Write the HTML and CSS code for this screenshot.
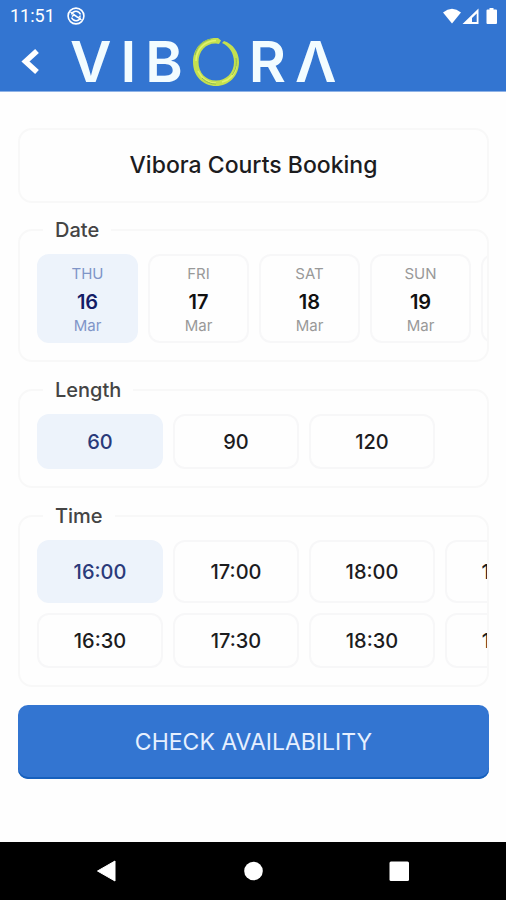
FILE: index.html
```html
<!DOCTYPE html>
<html lang="en">
<head>
<meta charset="utf-8">
<meta name="viewport" content="width=device-width, initial-scale=1">
<title>Vibora Courts Booking</title>
<link rel="stylesheet" href="styles.css">
</head>
<body>
<header class="top">
  <div class="status">
    <span class="clock">11:51</span>
    <svg class="status-app" width="20" height="20" viewBox="0 0 20 20" fill="none" stroke="#fff" aria-hidden="true">
      <circle cx="10" cy="10" r="7.9" stroke-width="1.6"/>
      <path d="M5.500 8.500C7 4.500 12.500 4 14.500 8.500M14.500 11.500C13 15.500 7.500 16 5.500 11.500" stroke-width="1.500"/>
      <path d="M4.500 6L15.500 14M6 10.500c2-2.500 4-.5 5 .5s2.500.5 3.500-1.500" stroke-width="1.500"/>
    </svg>
    <svg class="status-icons" width="56" height="20" viewBox="0 0 56 20" fill="#fff" aria-hidden="true">
      <path d="M1 6.500Q10-.8 19 6.500L10 17.500Z"/>
      <path fill-rule="evenodd" d="M20.500 18L36.500 2.500V18ZM30 16H34.700V7.600L30 12Z"/>
      <path d="M47.500 2h4v1.500H54q1 0 1 1V17q0 1-1 1h-8.500q-1 0-1-1V4.500q0-1 1-1h2Z"/>
    </svg>
  </div>
  <div class="bar">
    <button class="back" type="button" aria-label="Back">
      <svg width="20" height="28" viewBox="0 0 20 28" fill="none" stroke="#fff" stroke-width="5.500" aria-hidden="true"><path d="M17 3L5.500 13.500l11.500 10.500"/></svg>
    </button>
    <div class="logo">
      <span>V</span><span>I</span><span>B</span>
      <svg width="48" height="50" viewBox="0 0 48 50" fill="none" aria-hidden="true">
        <path fill="#c4e04f" fill-rule="evenodd" d="M29 3.500L26 1C12 0 1 10 1 25c0 14 10 24 23 24s23-10 23-24C47 15 41 7 32 4l-2 2c7 3 12 10 12 19 0 11-8 18.500-18 18.500S6.500 36 6.500 25 14 6 24 6.500L27 7Z"/>
        <path stroke="#e2f36c" stroke-width="1.500" d="M24 3.500C12 4 4 13 4 24M6 34c4 8 10 12 18 12M30 45c8-2 13-8 14.500-16"/>
        <path stroke="#8fbd58" d="M3 18C5 9 11 4 19 2M10 41c4 4 9 6 14 6M40 38c4-5 5-11 4-17"/>
      </svg>
      <span>R</span><span>Λ</span>
    </div>
  </div>
</header>
<main class="content">
  <h1 class="title">Vibora Courts Booking</h1>
  <fieldset class="group">
    <legend>Date</legend>
    <div class="row">
      <button class="day selected" type="button" aria-pressed="true"><span>THU</span><strong>16</strong><span>Mar</span></button>
      <button class="day" type="button" aria-pressed="false"><span>FRI</span><strong>17</strong><span>Mar</span></button>
      <button class="day" type="button" aria-pressed="false"><span>SAT</span><strong>18</strong><span>Mar</span></button>
      <button class="day" type="button" aria-pressed="false"><span>SUN</span><strong>19</strong><span>Mar</span></button>
      <button class="day" type="button" aria-label="Next day"></button>
    </div>
  </fieldset>
  <fieldset class="group">
    <legend>Length</legend>
    <div class="row">
      <button class="slot selected" type="button" aria-pressed="true">60</button>
      <button class="slot" type="button" aria-pressed="false">90</button>
      <button class="slot" type="button" aria-pressed="false">120</button>
    </div>
  </fieldset>
  <fieldset class="group">
    <legend>Time</legend>
    <div class="row">
      <button class="slot tall selected" type="button" aria-pressed="true">16:00</button>
      <button class="slot tall" type="button" aria-pressed="false">17:00</button>
      <button class="slot tall" type="button" aria-pressed="false">18:00</button>
      <button class="slot tall" type="button" aria-pressed="false">19:00</button>
    </div>
    <div class="row">
      <button class="slot" type="button" aria-pressed="false">16:30</button>
      <button class="slot" type="button" aria-pressed="false">17:30</button>
      <button class="slot" type="button" aria-pressed="false">18:30</button>
      <button class="slot" type="button" aria-pressed="false">19:30</button>
    </div>
  </fieldset>
  <button class="submit" type="button">CHECK AVAILABILITY</button>
</main>
<nav class="system" aria-label="System">
  <button type="button" aria-label="Back"><svg width="22" height="22" viewBox="0 0 22 22" fill="#fff"><path d="M19 1v20L1.500 11Z" stroke="#fff" stroke-linejoin="round"/></svg></button>
  <button type="button" aria-label="Home"><svg width="22" height="22" viewBox="0 0 22 22" fill="#fff"><circle cx="11.500" cy="11" r="9.300"/></svg></button>
  <button type="button" aria-label="Recent apps"><svg width="22" height="22" viewBox="0 0 22 22" fill="#fff"><rect x="1.500" y="1.500" width="19.500" height="19.500" rx="1.500"/></svg></button>
</nav>
</body>
</html>
```
FILE: styles.css
```css
* {
  box-sizing: border-box;
}

body {
  margin: 0;
  min-height: 100vh;
  display: flex;
  flex-direction: column;
  background: #fefefe;
  color: #1c1c1e;
  font-family: Inter, "Liberation Sans", sans-serif;
}

button {
  margin: 0;
  padding: 0;
  border: 0;
  background: none;
  color: inherit;
  font: inherit;
}

svg {
  display: block;
  flex: none;
}

.top {
  background: #3375d1;
  border-bottom: 1px solid #8eb2e6;
  color: #fff;
}

.status {
  display: flex;
  align-items: center;
  height: 32px;
  padding: 0 8px 0 10px;
}

.clock {
  font: 400 18px/20px Roboto, sans-serif;
}

.status-app {
  margin-left: 11px;
}

.status-icons {
  margin-left: auto;
}

.bar {
  display: flex;
  align-items: center;
  gap: 30px;
  height: 59px;
  padding: 0 20px;
}

.logo {
  display: flex;
  align-items: center;
  gap: 9px;
  color: #f2fcff;
  font: 600 57px/60px Inter, sans-serif;
}

.content {
  flex: 1;
  display: flex;
  flex-direction: column;
  padding: 36px 17px 20px 18px;
}

.title {
  margin: 0 0 15px;
  padding: 21px 16px;
  border: 2px solid #f8f8f8;
  border-radius: 14px;
  text-align: center;
  font-size: 23px;
  line-height: 29px;
  font-weight: 500;
}

.group {
  min-width: 0;
  margin: 0 0 16px;
  padding: 12px 0 17px 17px;
  border: 2px solid #f8f8f8;
  border-radius: 14px;
}

.group legend {
  margin-left: 6px;
  padding: 0 12px;
  color: #444;
  font-size: 20px;
  line-height: 24px;
  font-weight: 500;
}

.row {
  display: flex;
  gap: 10px;
  overflow: hidden;
}

.row + .row {
  margin-top: 10px;
}

.day,
.slot {
  flex: none;
  border: 2px solid #f7f7f8;
  border-radius: 12px;
  background: #fefefe;
}

.day {
  display: flex;
  flex-direction: column;
  align-items: center;
  justify-content: center;
  width: 101px;
  height: 89px;
  padding-bottom: 2px;
  color: #999;
  font-size: 15px;
  line-height: 24px;
}

.day strong {
  color: #111;
  font-size: 20px;
  line-height: 32px;
  font-weight: 600;
}

.day span:last-child {
  line-height: 16px;
}

.slot {
  width: 126px;
  height: 55px;
  font-size: 20px;
  font-weight: 500;
}

.tall {
  height: 63px;
}

.selected {
  border-color: #edf3fb;
  background: #edf3fb;
  color: #2a3a7a;
}

.day.selected {
  color: #7f95c8;
}

.day.selected strong {
  color: #141c66;
}

.submit {
  min-height: 74px;
  margin-top: 2px;
  border-radius: 10px;
  background: #3375d1;
  box-shadow: inset 0 -2px #1660bd;
  color: #e6f0ff;
  font-size: 23px;
  line-height: 28px;
}

.system {
  display: flex;
  align-items: center;
  justify-content: center;
  gap: 124px;
  height: 58px;
  background: #000;
}
```
